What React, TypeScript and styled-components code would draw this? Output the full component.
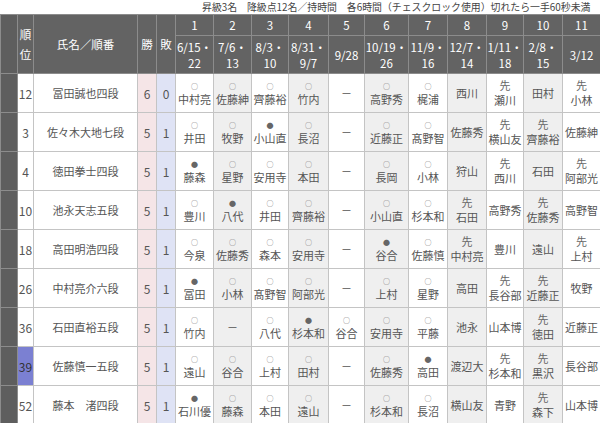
import styled, { createGlobalStyle } from "styled-components";

const GlobalStyle = createGlobalStyle`
    html, body {
        margin: 0;
        padding: 0;
        background: #fff;
        overflow: hidden;
    }
    body {
        font-family: "Noto Sans CJK JP", "Noto Sans", sans-serif;
        color: #555;
    }
`;

const Page = styled.div`
    width: 600px;
    overflow: hidden;
`;

const Caption = styled.div`
    height: 14px;
    line-height: 14px;
    padding-left: 202px;
    font-size: 9.9px;
    color: #444;
    white-space: nowrap;
    overflow: hidden;
`;

const Table = styled.table`
    width: 600px;
    table-layout: fixed;
    border-collapse: collapse;
    font-size: 11px;
`;

const HeadCell = styled.th<{ $tall?: boolean }>`
    background: #636363;
    color: #fff;
    font-weight: normal;
    font-size: 11.5px;
    border: 1px solid #8c8c8c;
    height: ${p => (p.$tall ? "37px" : "20px")};
    line-height: ${p => (p.$tall ? "16px" : "20px")};
    padding: 0;
    text-align: center;
    vertical-align: middle;
`;

const SideCell = styled.td`
    background: #5e5e5e;
    border: 1px solid #8c8c8c;
    padding: 0;
`;

const Row = styled.tr`
    height: 39px;
`;

const RankCell = styled.td<{ $mark?: boolean }>`
    background: ${p => (p.$mark ? "#7b80d2" : "#fff")};
    color: ${p => (p.$mark ? "#333" : "#555")};
    border: 1px solid #c4c4c4;
    font-size: 12px;
    text-align: center;
    padding: 0;
`;

const NameCell = styled.td`
    border: 1px solid #c4c4c4;
    font-size: 11px;
    text-align: center;
    padding: 0;
`;

const ScoreCell = styled.td<{ $lose?: boolean }>`
    background: ${p => (p.$lose ? "#dfe3f5" : "#f5e5e7")};
    border: 1px solid #c4c4c4;
    font-size: 12px;
    text-align: center;
    padding: 0;
`;

const RoundCell = styled.td<{ $shaded?: boolean }>`
    background: ${p => (p.$shaded ? "#efefef" : "#fff")};
    border: 1px solid #c4c4c4;
    text-align: center;
    vertical-align: middle;
    padding: 0;
    font-size: 11px;
    line-height: 15px;
    white-space: nowrap;
`;

const Mark = styled.div<{ $small?: boolean }>`
    font-size: ${p => (p.$small ? "7px" : "11px")};
    line-height: ${p => (p.$small ? "12px" : "15px")};
    color: #666;
`;

const Opponent = styled.div`
    line-height: 15px;
`;

const widths = [17, 16, 104, 19, 19, 38, 38, 37, 40, 36, 44, 39, 39, 37, 39, 38];

const rounds: [string, string | null][] = [
    ["6/15・", "22"],
    ["7/6・", "13"],
    ["8/3・", "10"],
    ["8/31・", "9/7"],
    ["9/28", null],
    ["10/19・", "26"],
    ["11/9・", "16"],
    ["12/7・", "14"],
    ["1/11・", "18"],
    ["2/8・", "15"],
    ["3/12", null],
];

interface IPlayer {
    rank: number;
    name: string;
    win: number;
    lose: number;
    games: string[];
    marked?: boolean;
}

// o = 勝, x = 負, s = 先手, "-" = 抜け番
const players: IPlayer[] = [
    { rank: 12, name: "冨田誠也四段", win: 6, lose: 0,
      games: ["o中村亮", "o佐藤紳", "o齊藤裕", "o竹内", "-", "o高野秀", "o梶浦", "西川", "s瀬川", "田村", "s小林"] },
    { rank: 3, name: "佐々木大地七段", win: 5, lose: 1,
      games: ["o井田", "o牧野", "x小山直", "o長沼", "-", "o近藤正", "o髙野智", "佐藤秀", "s横山友", "s齊藤裕", "佐藤紳"] },
    { rank: 4, name: "徳田拳士四段", win: 5, lose: 1,
      games: ["x藤森", "o星野", "o安用寺", "o本田", "-", "o長岡", "o小林", "狩山", "s西川", "石田", "s阿部光"] },
    { rank: 10, name: "池永天志五段", win: 5, lose: 1,
      games: ["o豊川", "x八代", "o井田", "o齊藤裕", "-", "o小山直", "o杉本和", "s石田", "高野秀", "s佐藤秀", "高野智"] },
    { rank: 18, name: "高田明浩四段", win: 5, lose: 1,
      games: ["o今泉", "o佐藤秀", "o森本", "o安用寺", "-", "x谷合", "o佐藤慎", "s中村亮", "豊川", "遠山", "s上村"] },
    { rank: 26, name: "中村亮介六段", win: 5, lose: 1,
      games: ["x冨田", "o小林", "o髙野智", "o阿部光", "-", "o上村", "o星野", "高田", "s長谷部", "s近藤正", "牧野"] },
    { rank: 36, name: "石田直裕五段", win: 5, lose: 1,
      games: ["o竹内", "-", "o八代", "x杉本和", "o谷合", "o安用寺", "o平藤", "池永", "山本博", "s徳田", "近藤正"] },
    { rank: 39, name: "佐藤慎一五段", win: 5, lose: 1, marked: true,
      games: ["o遠山", "o谷合", "o上村", "o田村", "-", "o佐藤秀", "x高田", "渡辺大", "s杉本和", "s黒沢", "長谷部"] },
    { rank: 52, name: "藤本　渚四段", win: 5, lose: 1,
      games: ["x石川優", "o藤森", "o本田", "o遠山", "-", "o杉本和", "o長沼", "横山友", "青野", "s森下", "山本博"] },
];

function GameResult({ code }: { code: string }) {
    if (code === "-") return <Opponent>－</Opponent>;
    const head = code[0];
    if (head === "o" || head === "x") {
        return (
            <>
                <Mark $small>{head === "o" ? "○" : "●"}</Mark>
                <Opponent>{code.slice(1)}</Opponent>
            </>
        );
    }
    if (head === "s") {
        return (
            <>
                <Mark>先</Mark>
                <Opponent>{code.slice(1)}</Opponent>
            </>
        );
    }
    return <Opponent>{code}</Opponent>;
}

function App() {
    return (
        <Page>
            <GlobalStyle />
            <Caption>
                昇級3名　降級点12名／持時間　各6時間（チェスクロック使用）切れたら一手60秒未満
            </Caption>
            <Table>
                <colgroup>
                    {widths.map((w, i) => <col key={i} style={{ width: w }} />)}
                </colgroup>
                <thead>
                    <tr>
                        <SideCell rowSpan={2} />
                        <HeadCell rowSpan={2}>順位</HeadCell>
                        <HeadCell rowSpan={2}>氏名／順番</HeadCell>
                        <HeadCell rowSpan={2}>勝</HeadCell>
                        <HeadCell rowSpan={2}>敗</HeadCell>
                        {rounds.map((_, i) => <HeadCell key={i}>{i + 1}</HeadCell>)}
                    </tr>
                    <tr>
                        {rounds.map(([a, b], i) => (
                            <HeadCell $tall key={i}>
                                {a}{b && <><br />{b}</>}
                            </HeadCell>
                        ))}
                    </tr>
                </thead>
                <tbody>
                    {players.map((p) => (
                        <Row key={p.rank}>
                            <SideCell />
                            <RankCell $mark={p.marked}>{p.rank}</RankCell>
                            <NameCell>{p.name}</NameCell>
                            <ScoreCell>{p.win}</ScoreCell>
                            <ScoreCell $lose>{p.lose}</ScoreCell>
                            {p.games.map((g, i) => (
                                <RoundCell key={i} $shaded={i % 2 === 1}>
                                    <GameResult code={g} />
                                </RoundCell>
                            ))}
                        </Row>
                    ))}
                </tbody>
            </Table>
        </Page>
    );
}

export default App;
